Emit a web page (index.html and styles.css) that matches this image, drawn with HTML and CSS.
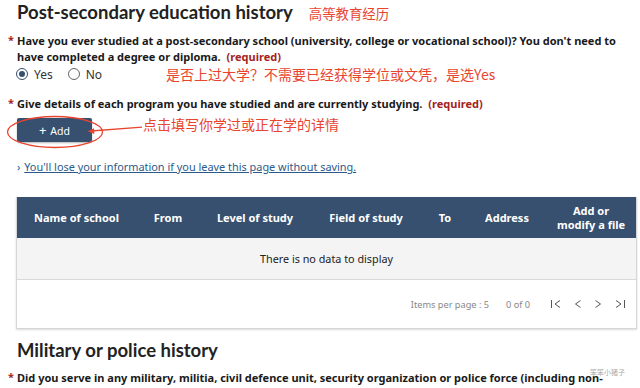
FILE: index.html
```html
<!DOCTYPE html>
<html lang="en">
<head>
    <meta charset="utf-8" />
    <title>Post-secondary education history</title>
    <link rel="stylesheet" href="styles.css">
</head>
<body>
    <div class="page">
        <h2 class="section-title">
            Post-secondary education history
            <span class="note note-title">高等教育经历</span>
        </h2>

        <div class="question q1">
            <span class="star">*</span>
            Have you ever studied at a post-secondary school (university, college or vocational school)? You don't need to have completed a degree or diploma.
            <span class="required">(required)</span>
        </div>
        <div class="radio-row">
            <label class="radio"><span class="dot checked"></span>Yes</label>
            <label class="radio"><span class="dot"></span>No</label>
            <span class="note note-radio">是否上过大学？不需要已经获得学位或文凭，是选Yes</span>
        </div>

        <div class="question q2">
            <span class="star">*</span>
            Give details of each program you have studied and are currently studying.
            <span class="required">(required)</span>
        </div>
        <div class="add-row">
            <button class="add-button"><span class="plus">+</span> Add</button>
            <span class="note note-add">点击填写你学过或正在学的详情</span>
            <!-- red hand-drawn ring and arrow pointing at the button -->
            <svg class="ring" width="98" height="34" viewBox="0 0 98 34">
                <ellipse cx="49" cy="17" rx="47.5" ry="15.5" fill="none" stroke="#e8452f" stroke-width="1.3" />
            </svg>
            <svg class="arrow" width="56" height="10" viewBox="0 0 56 10">
                <line x1="4" y1="6" x2="55" y2="2.2" stroke="#e8452f" stroke-width="1.3" />
                <path d="M0.5 6.3 L7 3.3 L7.4 9 Z" fill="#e8452f" />
            </svg>
        </div>

        <p class="warning">
            <span class="chev">›</span>
            <a href="#">You'll lose your information if you leave this page without saving.</a>
        </p>

        <div class="grid">
            <table>
                <thead>
                    <tr>
                        <th class="c1">Name of school</th>
                        <th class="c2">From</th>
                        <th class="c3">Level of study</th>
                        <th class="c4">Field of study</th>
                        <th class="c5">To</th>
                        <th class="c6">Address</th>
                        <th class="c7">Add or<br>modify a file</th>
                    </tr>
                </thead>
                <tbody>
                    <tr>
                        <td colspan="7" class="empty">There is no data to display</td>
                    </tr>
                </tbody>
            </table>
            <div class="pager">
                <span>Items per page : 5</span>
                <span class="count">0 of 0</span>
                <span class="nav">
                    <svg width="12" height="10" viewBox="0 0 12 10"><path d="M1.5 1 V9 M10 1.5 L5 5 L10 8.5" fill="none" stroke="#555" stroke-width="1" /></svg>
                    <svg width="8" height="10" viewBox="0 0 8 10"><path d="M6.5 1.5 L1.5 5 L6.5 8.5" fill="none" stroke="#555" stroke-width="1" /></svg>
                    <svg width="8" height="10" viewBox="0 0 8 10"><path d="M1.5 1.5 L6.5 5 L1.5 8.5" fill="none" stroke="#555" stroke-width="1" /></svg>
                    <svg width="12" height="10" viewBox="0 0 12 10"><path d="M2 1.5 L7 5 L2 8.5 M10.5 1 V9" fill="none" stroke="#555" stroke-width="1" /></svg>
                </span>
            </div>
        </div>

        <h2 class="section-title military">Military or police history</h2>
        <div class="question q3">
            <span class="star">*</span>
            Did you serve in any military, militia, civil defence unit, security organization or police force (including non-
        </div>
        <span class="watermark">笨笨小猪子</span>
    </div>
</body>
</html>
```

FILE: styles.css
```css
body {
    margin: 0;
    background: #fff;
    font-family: "Noto Sans", "Noto Sans CJK SC", sans-serif;
    color: #1a1a1a;
}

.page {
    position: relative;
    width: 640px;
    height: 388px;
    overflow: hidden;
    padding: 0 5px 0 17px;
    box-sizing: border-box;
}

.section-title {
    font-family: Lato, sans-serif;
    font-weight: 700;
    font-size: 18.5px;
    margin: 0;
    height: 24px;
    display: flex;
    align-items: center;
    color: #222;
}

.note {
    font-family: "Noto Sans CJK SC", sans-serif;
    font-weight: 400;
    color: #e8452f;
    font-size: 14px;
    line-height: 18px;
}

.note-title {
    font-size: 13.4px;
    margin-left: 16px;
    margin-top: 2px;
}

.question {
    position: relative;
    font-size: 11px;
    font-weight: 700;
    line-height: 16px;
    width: 605px;
}

.q1 {
    margin-top: 9px;
}

.star {
    position: absolute;
    left: -9px;
    top: -1px;
    color: #a3231d;
}

.required {
    color: #a3231d;
    margin-left: 3px;
}

.radio-row {
    display: flex;
    align-items: center;
    height: 18px;
    font-size: 12px;
}

.radio {
    display: flex;
    align-items: center;
    margin-right: 16px;
    color: #333;
}

.dot {
    width: 12px;
    height: 12px;
    border: 1px solid #666;
    border-radius: 50%;
    box-sizing: border-box;
    margin-right: 6px;
    position: relative;
    margin-left: -1px;
}

.dot.checked {
    border-color: #36506f;
}

.dot.checked::after {
    content: "";
    position: absolute;
    left: 2px;
    top: 2px;
    width: 6px;
    height: 6px;
    border-radius: 50%;
    background: #36506f;
}

.note-radio {
    margin-left: 48px;
}

.q2 {
    margin-top: 13px;
}

.add-row {
    position: relative;
    display: flex;
    align-items: center;
    height: 28px;
    margin-top: 4px;
}

.add-button {
    width: 75px;
    height: 24px;
    background: #37506f;
    color: #fff;
    border: none;
    border-radius: 2px;
    font-family: "Noto Sans", sans-serif;
    font-size: 10.5px;
    box-shadow: 0 1px 2px rgba(0, 0, 0, 0.3);
}

.plus {
    font-size: 13px;
    margin-right: 1px;
}

.note-add {
    align-self: flex-start;
    margin-left: 51px;
    margin-top: -1px;
}

.ring {
    position: absolute;
    left: -11px;
    top: -1px;
}

.arrow {
    position: absolute;
    left: 70px;
    top: 9px;
}

.warning {
    margin: 15px 0 0 0;
    font-size: 10.9px;
    line-height: 16px;
    color: #2b5a8a;
}

.chev {
    margin-right: 1px;
}

.warning a {
    color: #2b5a8a;
}

.grid {
    margin: 22px 0 0 -1px;
    width: 619px;
    border: 1px solid #d6d6d6;
    border-top: none;
    box-shadow: 0 1px 2px rgba(0, 0, 0, 0.15);
}

table {
    width: 100%;
    border-collapse: collapse;
    table-layout: fixed;
}

th {
    background: #37506f;
    color: #fff;
    font-size: 11px;
    font-weight: 700;
    height: 41px;
    padding: 0;
    line-height: 14px;
}

.c1 { width: 119px; }
.c2 { width: 64px; }
.c3 { width: 110px; }
.c4 { width: 112px; }
.c5 { width: 46px; }
.c6 { width: 78px; }

.empty {
    background: #f4f4f4;
    height: 41px;
    padding: 0;
    text-align: center;
    font-size: 10.8px;
    color: #222;
    border-bottom: 1px solid #d9d9d9;
}

.pager {
    display: flex;
    justify-content: flex-end;
    align-items: center;
    height: 48px;
    font-size: 9.2px;
    color: #888;
    padding-right: 10px;
}

.count {
    margin-left: 17px;
}

.nav {
    display: flex;
    align-items: center;
    gap: 12px;
    margin-left: 20px;
}

.military {
    margin-top: 9px;
}

.q3 {
    margin-top: 8px;
    white-space: nowrap;
}

.watermark {
    position: absolute;
    right: 15px;
    bottom: 11px;
    font-family: "Noto Sans CJK SC", sans-serif;
    font-size: 7px;
    color: #aaa;
}
```
